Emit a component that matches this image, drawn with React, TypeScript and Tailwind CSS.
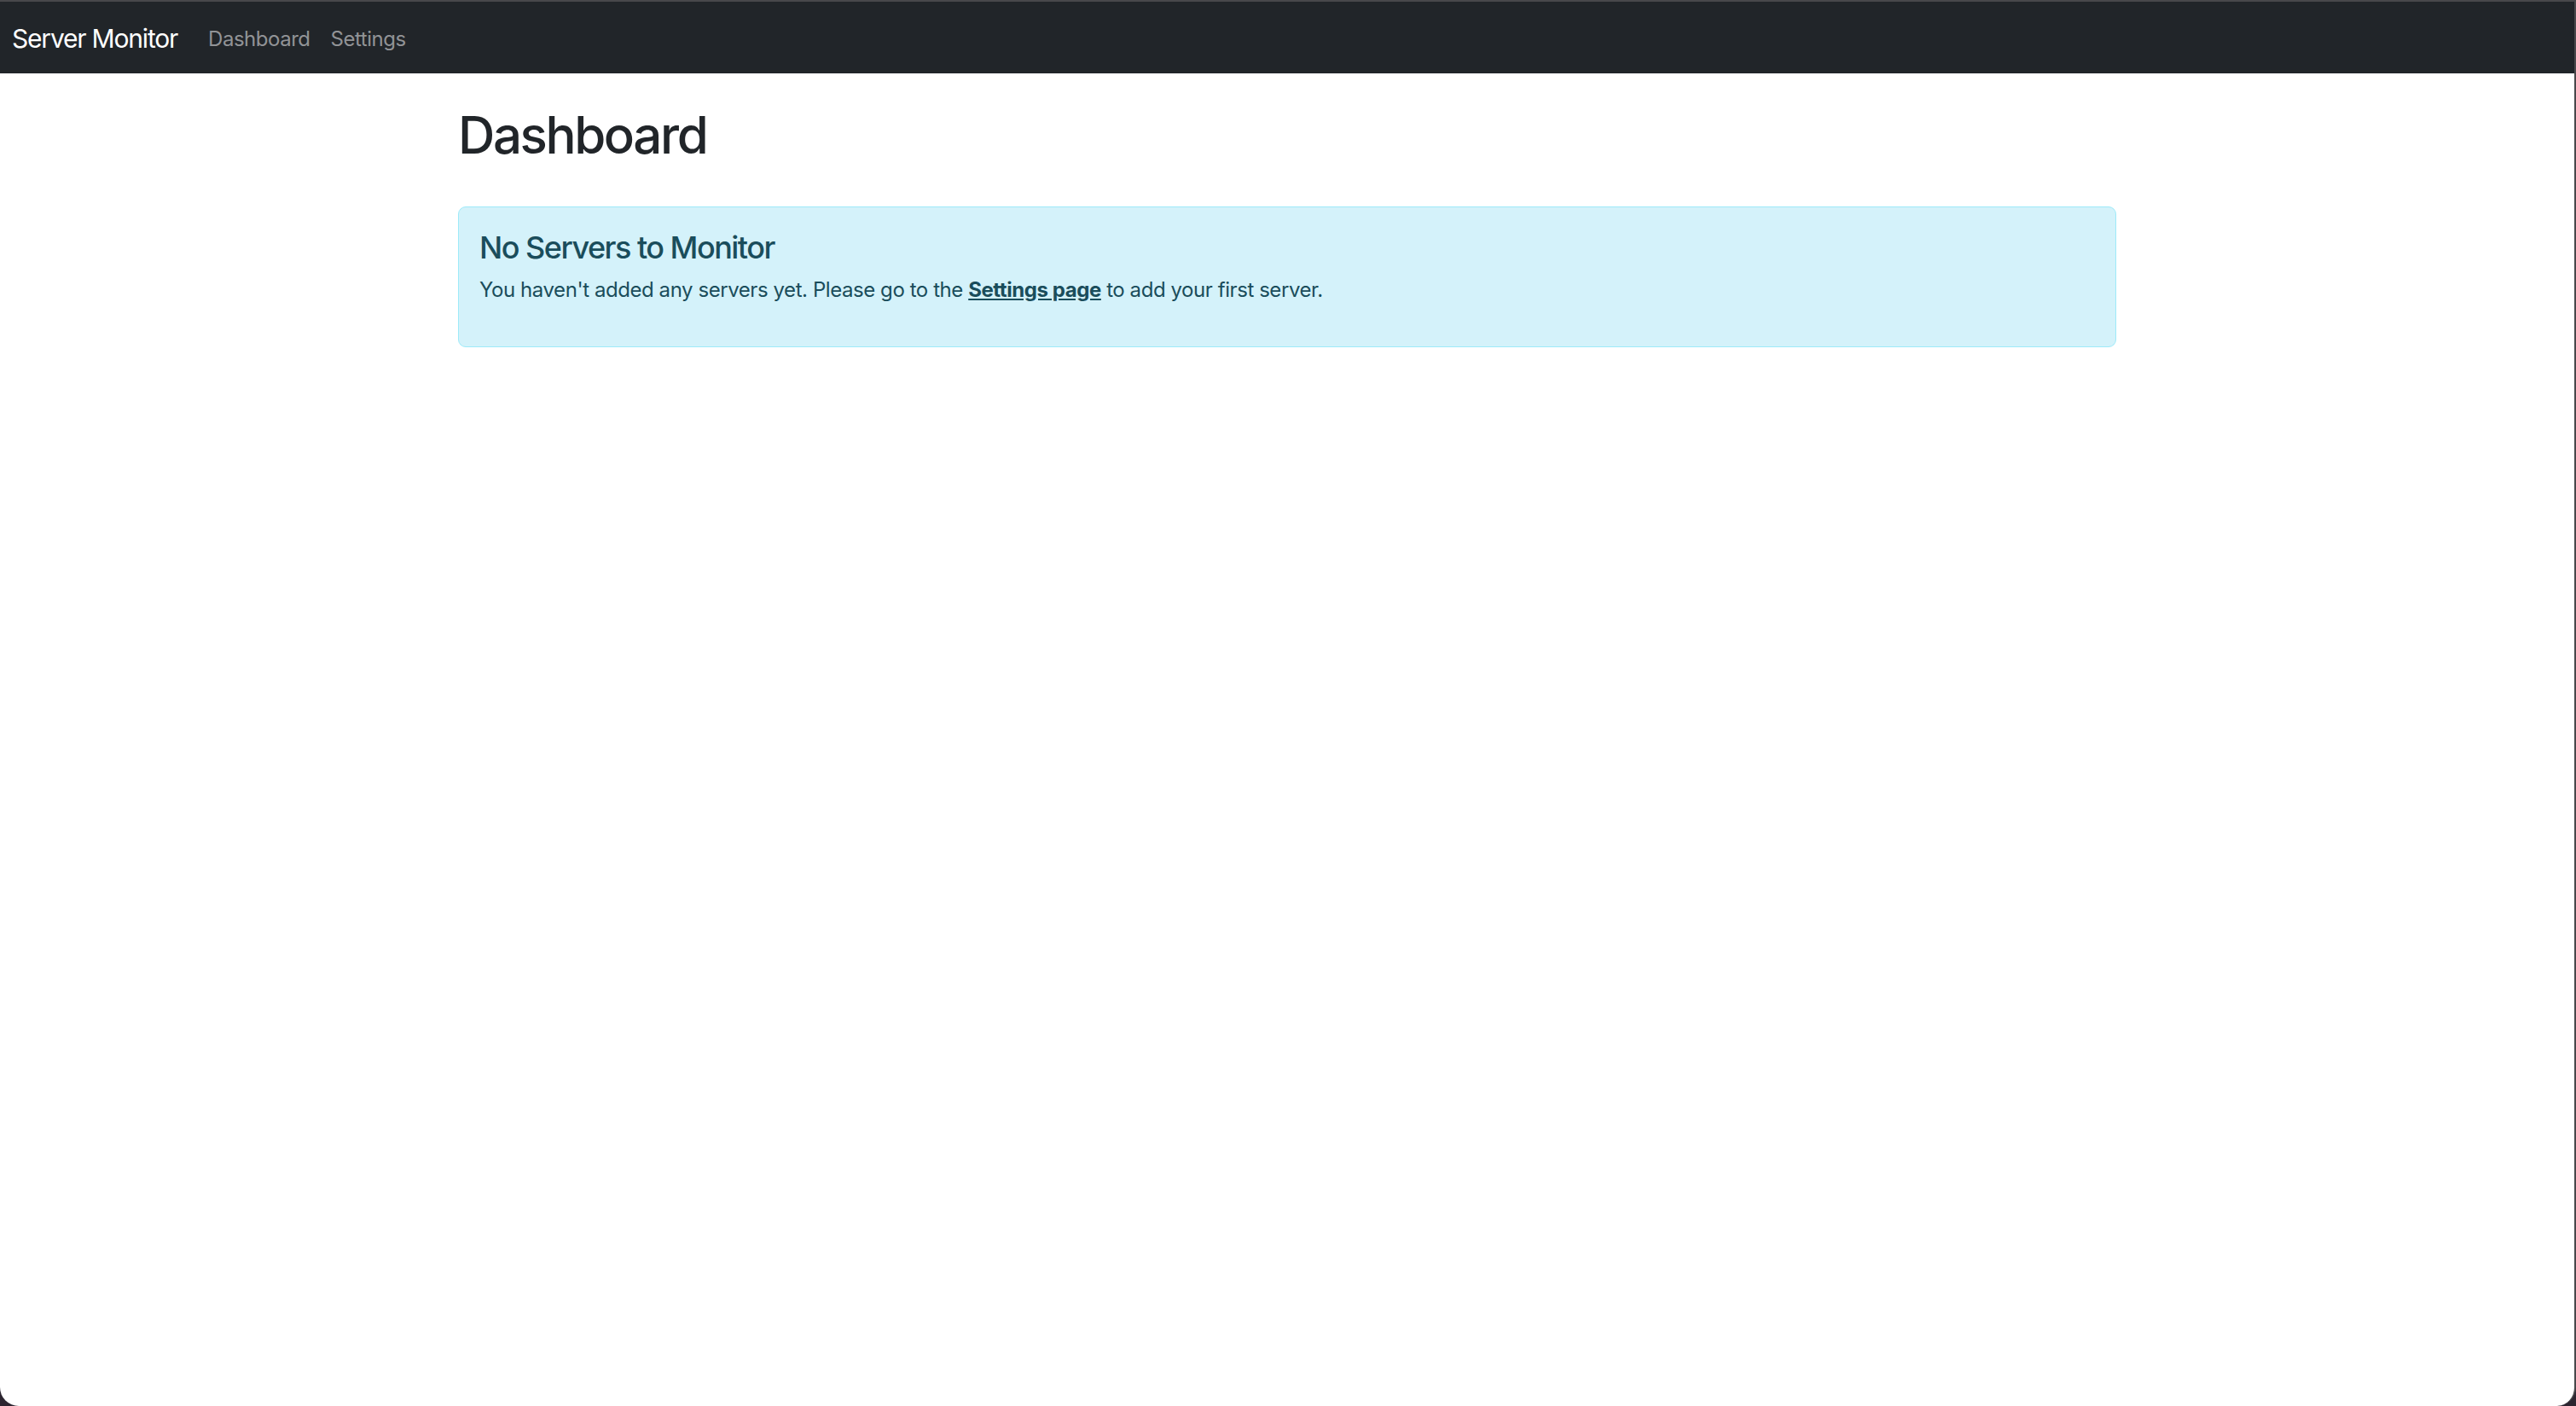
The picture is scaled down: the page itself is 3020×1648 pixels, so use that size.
const navLinks = ['Dashboard', 'Settings'];

const Navbar = () => (
  <nav className="flex h-[84px] shrink-0 items-center bg-[#212529] px-[14px] pt-[3px]">
    <a className="mr-[24px] text-[30px] leading-[45px] tracking-[-0.04em] text-white">Server Monitor</a>
    <div className="flex items-center">
      {navLinks.map((link) => (
        <a key={link} className="px-[12px] text-[24px] leading-[36px] tracking-[-0.02em] text-[#919396]">
          {link}
        </a>
      ))}
    </div>
  </nav>
);

const App = () => {
  return (
    <div
      className="flex h-[1648px] w-full flex-col bg-[#2c2530]"
      style={{ fontFamily: 'Inter, "Noto Sans", "Liberation Sans", sans-serif' }}
    >
      <div className="h-[2px] shrink-0 bg-[#48484b]" />
      <div className="flex flex-1 flex-col overflow-hidden rounded-b-[22px] border-r-2 border-[#48484b] bg-white">
        <Navbar />

        {/* Main content */}
        <main className="mx-auto mt-[36px] w-[1944px]">
          <h1 className="mb-[48px] text-[60px] font-medium leading-[72px] tracking-[-0.04em] text-[#212529]">
            Dashboard
          </h1>

          <div className="rounded-[9px] border-[1.5px] border-[#9eeaf9] bg-[#d4f2fa] p-[24px] text-[#1a4d5b]">
            <h4 className="mt-[2px] mb-[10px] text-[36px] font-medium leading-[43px] tracking-[-0.042em]">
              No Servers to Monitor
            </h4>
            <p className="mb-[24px] text-[24px] leading-[36px] tracking-[-0.018em]">
              You haven't added any servers yet. Please go to the{' '}
              <a className="font-bold underline">Settings page</a> to add your first server.
            </p>
          </div>
        </main>
      </div>
    </div>
  );
};

export default App;
